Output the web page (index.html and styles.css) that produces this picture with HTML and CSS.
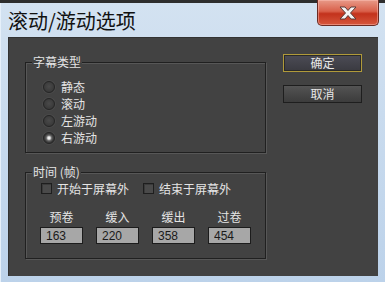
FILE: index.html
```html
<!DOCTYPE html>
<html lang="zh-CN">
<head>
  <meta charset="UTF-8">
  <title>滚动/游动选项</title>
  <link rel="stylesheet" href="styles.css">
</head>
<body>

  <div class="window">
    <div class="titlebar">
      <span class="title">滚动/游动选项</span>
      <button class="close" title="关闭">
        <svg width="22" height="14" viewBox="0 0 22 14">
          <path d="M3 1 L8 1 L11 4.5 L14 1 L19 1 L13.5 7 L19 13 L14 13 L11 9.5 L8 13 L3 13 L8.5 7 Z"
                fill="#f4f4f4" stroke="#5a3a36" stroke-width="1"/>
        </svg>
      </button>
    </div>

    <div class="content">
      <div class="left">
        <fieldset class="group">
          <legend>字幕类型</legend>
          <div class="options">
            <label><input type="radio" name="type">静态</label>
            <label><input type="radio" name="type">滚动</label>
            <label><input type="radio" name="type">左游动</label>
            <label><input type="radio" name="type" checked>右游动</label>
          </div>
        </fieldset>

        <fieldset class="group timing">
          <legend>时间 (帧)</legend>
          <div class="checks">
            <label><input type="checkbox">开始于屏幕外</label>
            <label><input type="checkbox">结束于屏幕外</label>
          </div>
          <div class="fields">
            <div class="field"><span>预卷</span><input type="text" value="163"></div>
            <div class="field"><span>缓入</span><input type="text" value="220"></div>
            <div class="field"><span>缓出</span><input type="text" value="358"></div>
            <div class="field"><span>过卷</span><input type="text" value="454"></div>
          </div>
        </fieldset>
      </div>

      <div class="actions">
        <button class="btn default">确定</button>
        <button class="btn">取消</button>
      </div>
    </div>
  </div>

</body>
</html>
```

FILE: styles.css
```css
* {
  box-sizing: border-box;
}

body {
  margin: 0;
  width: 385px;
  height: 282px;
  overflow: hidden;
  background-color: #2e2e2e;
  font-family: "Noto Sans CJK SC", "Noto Sans", sans-serif;
}

.window {
  height: 279px;
  margin-top: 3px;
  padding: 0 7px 6px 8px;
  background: linear-gradient(180deg, #d3e2f1 0%, #c9dbee 40%, #bcd2ea 100%);
  box-shadow: inset 1px 0 0 #e6f0fa;
  display: flex;
  flex-direction: column;
}

.titlebar {
  height: 34px;
  display: flex;
  justify-content: space-between;
  align-items: flex-start;
}

.title {
  margin-top: 5px;
  font-size: 20px;
  line-height: 26px;
  color: #111;
}

.close {
  margin-top: -3px;
  margin-right: -1px;
  width: 62px;
  height: 26px;
  padding: 0;
  border: 1px solid #6b2a22;
  border-top: none;
  border-radius: 0 0 5px 5px;
  background: linear-gradient(180deg, #e89a88 0%, #d9604a 45%, #c3321c 55%, #d6563c 100%);
  box-shadow: inset 0 0 0 1px rgba(255, 200, 190, 0.45);
  display: flex;
  justify-content: center;
  align-items: center;
}

.content {
  flex: 1;
  background-color: #424242;
  box-shadow: inset 1px 1px 0 #333;
  padding: 17px 0 0 17px;
  display: flex;
  gap: 17px;
  color: #e4e4e4;
  font-size: 12px;
}

.left {
  width: 241px;
  display: flex;
  flex-direction: column;
  gap: 11px;
}

.group {
  margin: 0;
  padding: 0 0 0 6px;
  border: 1px solid #202020;
  box-shadow: inset 1px 1px 0 #575757, 1px 1px 0 #575757;
  min-width: 0;
}

.group legend {
  padding: 0 1px;
  line-height: 16px;
  background-color: #424242;
}

.options {
  display: flex;
  flex-direction: column;
  padding: 8px 0 6px 11px;
}

label {
  display: flex;
  align-items: center;
  height: 17px;
  line-height: 17px;
}

input[type="radio"] {
  appearance: none;
  margin: 0 6px 0 0;
  width: 12px;
  height: 12px;
  border-radius: 50%;
  border: 1px solid #262626;
  background: radial-gradient(circle at 50% 45%, #4a4a4a 0%, #3c3c3c 60%, #333 100%);
  box-shadow: 0 0 0 1px #4a4a4a;
}

input[type="radio"]:checked {
  background: radial-gradient(circle at 50% 50%, #ffffff 0%, #e0e0e0 18%, #6a6a6a 38%, #3c3c3c 60%, #333 100%);
}

.checks {
  display: flex;
  gap: 14px;
  padding: 0 0 0 9px;
}

input[type="checkbox"] {
  appearance: none;
  margin: 0 5px 0 0;
  width: 11px;
  height: 11px;
  border: 1px solid #1e1e1e;
  background-color: #4a4a4a;
  box-shadow: inset 1px 1px 0 #3a3a3a;
}

.fields {
  display: grid;
  grid-template-columns: repeat(4, 43px);
  column-gap: 13px;
  padding: 12px 0 14px 8px;
}

.field {
  display: flex;
  flex-direction: column;
  align-items: center;
  gap: 2px;
}

.field span {
  line-height: 16px;
}

.field input {
  width: 43px;
  height: 17px;
  padding: 0 0 0 5px;
  border: 1px solid #1c1c1c;
  background-color: #a7a7a7;
  color: #1a1a1a;
  font-family: "Liberation Sans", Arial, sans-serif;
  font-size: 12px;
}

.actions {
  display: flex;
  flex-direction: column;
  gap: 13px;
}

.btn {
  width: 79px;
  height: 18px;
  padding: 0;
  border: 1px solid #1e1e1e;
  background: linear-gradient(180deg, #545454 0%, #474747 50%, #3c3c3c 100%);
  color: #e8e8e8;
  font-family: inherit;
  font-size: 12px;
  line-height: 16px;
}

.btn.default {
  border-color: #b09a3a;
  box-shadow: inset 0 0 0 1px #2a2a2a;
  background: linear-gradient(180deg, #4c4c56 0%, #43434b 50%, #3a3a40 100%);
}
```
